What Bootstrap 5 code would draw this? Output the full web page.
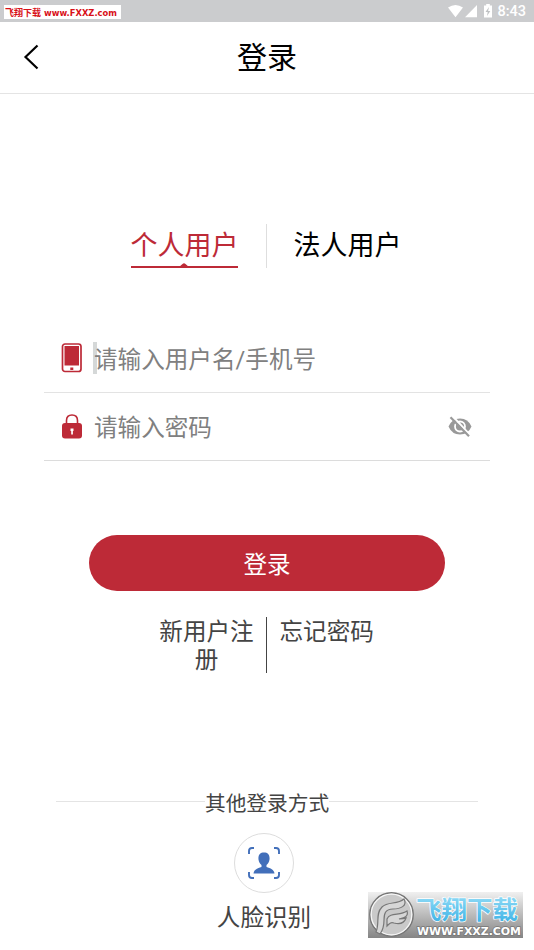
<!DOCTYPE html>
<html lang="zh-CN">
<head>
<meta charset="utf-8">
<meta name="viewport" content="width=device-width, initial-scale=1">
<title>登录</title>
<link href="https://cdn.jsdelivr.net/npm/bootstrap@5.3.0/dist/css/bootstrap.min.css" rel="stylesheet">
<style>
:root { --brand: #bd2a37; }
body { font-family: Roboto, "Noto Sans CJK SC", sans-serif; color: #444; }
svg { display: block; flex: none; }
.screen { height: 950px; }
.statusbar { height: 22px; background: #cbccce; padding: 0 8px 0 4px; }
.source-tag { background: #fff; width: 117px; height: 14px; margin-top: 5px; }
.source-tag svg { width: 117px; height: 14px; overflow: visible; }
.clock { font-size: 14.5px; line-height: 22px; font-weight: 500; padding-top: 2px; }
.topbar { height: 72px; border-bottom: 1px solid #e4e4e4; }
.back { width: 60px; padding-left: 22px; }
.back svg { margin-top: -2px; }
.title { font-size: 30px; line-height: 36px; color: #000; }
.user-tabs { margin-top: 130px; height: 44px; padding-right: 3px; }
.user-tab { width: 107px; font-size: 27px; line-height: 40px; white-space: nowrap; color: #000; padding-top: 2px; }
.user-tab.current { color: var(--brand); border-bottom: 2px solid var(--brand); }
.user-tab svg { margin: -3px auto 0; }
.tab-rule { width: 1px; background: #dedede; margin: 0 27px 0 28px; }
.fields { margin: 56px 44px 0; }
.field { height: 68px; border-bottom: 1px solid #dcdcdc; padding: 0 18px 0 17px; font-size: 23.6px; line-height: 32px; color: #808080; }
.field.first { height: 69px; border-color: #e3e3e3; }
.field .hint { margin-left: 12px; padding-top: 3px; }
.first .hint { padding-top: 4px !important; }
.hint .caret { left: -1px; top: 2px; width: 4px; height: 32px; background: #d5d8d8; z-index: -1; }
.hint { z-index: 0; }
.submit { margin: 74px 89px 0; height: 56px; font-size: 23.6px; line-height: 32px; background: var(--brand); color: #fff; }
.submit span { display: block; padding-top: 3px; }
.links { margin-top: 26px; height: 56px; font-size: 23.6px; line-height: 28px; }
.links a { color: #444; width: 96px; padding-top: 1px; }
.links-rule { width: 1px; background: #444; margin: 0 13px 0 11px; }
.other { margin: 113px 56px 0; font-size: 20.7px; line-height: 30px; height: 32px; padding-top: 1px; }
.other span { padding-top: 2px; }
.other hr { margin: -2px 0 0; color: #e4e4e4; opacity: 1; }
.face-login { padding-right: 6px; }
.face { width: 60px; height: 60px; border: 1px solid #ddd; margin-top: 15px; }
.face-label { font-size: 23.6px; line-height: 32px; margin-top: 9px; }
.watermark { left: 368px; top: 892px; }
</style>
</head>
<body class="bg-white">
<main class="screen position-relative d-flex flex-column overflow-hidden">
  <div class="statusbar d-flex justify-content-between">
    <div class="source-tag"><svg viewBox="0 0 117 14" fill="#d80f18" font-weight="bold"><text x="1" y="11" font-size="9" textLength="36" lengthAdjust="spacingAndGlyphs" font-family="Noto Sans CJK SC">飞翔下载</text><text x="40" y="10.600" font-size="9.500" textLength="73" lengthAdjust="spacingAndGlyphs" font-family="DejaVu Sans">www.FXXZ.com</text></svg></div>
    <div class="d-flex align-items-center text-white">
      <svg width="46" height="22" viewBox="0 0 46 22" fill="#fff"><path d="M1 7.500Q8.500 2.500 16 7.500L8.500 17.300ZM18 17.200 30 5v12.200ZM39.200 4h3.600v1.500H45v12h-8v-12h2.200Z"/><path d="m42 7-3.500 5h2.200l-.7 4 3.300-5h-2.200Z" fill="#bfc1c3"/></svg>
      <span class="clock ms-1">8:43</span>
    </div>
  </div>
  <header class="topbar d-flex align-items-center">
    <a class="back" href="#" aria-label="返回"><svg width="20" height="28" viewBox="0 0 20 28" fill="none" stroke="#000" stroke-width="2.200"><path d="M15.500 2.500 3.500 14l12 11.500"/></svg></a>
    <div class="title flex-fill text-center">登录</div>
    <div class="back"></div>
  </header>
  <nav class="user-tabs d-flex justify-content-center">
    <div class="user-tab current d-flex flex-column"><span>个人用户</span><svg width="10" height="4" viewBox="0 0 10 4" fill="#bd2a37"><path d="M0 4 3.500 1Q5-.4 6.500 1L10 4Z"/></svg></div>
    <div class="tab-rule"></div>
    <div class="user-tab">法人用户</div>
  </nav>
  <section class="fields">
    <div class="field first d-flex align-items-center">
      <svg width="21" height="30" viewBox="0 0 21 30"><rect x="1.500" y="1" width="18.500" height="27.500" rx="2.500" fill="#fff" stroke="#bd2a37" stroke-width="1.700"/><path fill="#bd2a37" d="M3.500 3H18v19.500H3.500zM9.300 24.500h3V27h-3z"/></svg>
      <span class="hint position-relative"><span class="caret position-absolute"></span>请输入用户名/手机号</span>
    </div>
    <div class="field d-flex align-items-center">
      <svg width="21" height="26" viewBox="0 0 21 26"><path d="M5.500 11V6.500Q5.500 1 11 1t5.500 5.500V11" fill="none" stroke="#bd2a37" stroke-width="1.600"/><rect x="1" y="9" width="20" height="15.500" rx="3" fill="#bd2a37"/><path d="M9.500 14.500h3V17h-.6v3.500h-1.700V17h-.7Z" fill="#fff"/></svg>
      <span class="hint">请输入密码</span>
      <svg class="ms-auto" width="24" height="22" viewBox="0 0 24 22"><path d="M.5 10.500Q4 2.500 12 2.500t11.500 8Q20 18.500 12 18.500T.5 10.500Z" fill="#999"/><circle cx="12" cy="10.500" r="5" fill="#999" stroke="#fff" stroke-width="1.800"/><path d="m4.500 0 18 19.500" stroke="#fff" stroke-width="2"/><path d="m2.500 1.200 18.500 19" stroke="#999" stroke-width="2.200"/></svg>
    </div>
  </section>
  <button class="submit btn border-0 rounded-pill p-0" type="button"><span>登录</span></button>
  <div class="links d-flex justify-content-center">
    <a class="text-decoration-none text-center" href="#">新用户注册</a>
    <div class="links-rule"></div>
    <a class="text-decoration-none" href="#">忘记密码</a>
  </div>
  <div class="other d-flex align-items-center"><hr class="flex-fill"><span>其他登录方式</span><hr class="flex-fill"></div>
  <div class="face-login d-flex flex-column align-items-center">
    <div class="face rounded-circle d-flex align-items-center justify-content-center">
      <svg width="34" height="34" viewBox="0 0 34 34"><path d="M2 8V5q0-3 3-3h2M27 2h2q3 0 3 3v3M2 26v3q0 3 3 3h2M27 32h2q3 0 3-3v-3" fill="none" stroke="#426fba" stroke-width="1.900"/><path d="M17 6.500c4 0 6 2.500 5.500 7-.3 2.500-1.500 4.500-3 5.500v2c4 1 7.500 2.500 8 6.500h-21c.5-4 4-5.500 8-6.500v-2c-1.500-1-2.700-3-3-5.500-.5-4.500 1.500-7 5.500-7Z" fill="#426fba"/></svg>
    </div>
    <div class="face-label">人脸识别</div>
  </div>
  <svg class="watermark position-absolute overflow-visible" width="155" height="46" viewBox="0 0 155 46">
    <defs>
      <linearGradient id="bar" x2="0" y2="1"><stop stop-color="#f0f0f0"/><stop offset="1" stop-color="#858585"/></linearGradient>
      <linearGradient id="sky" x2="0" y2="1"><stop offset=".2" stop-color="#8bd8f5"/><stop offset="1" stop-color="#35aee4"/></linearGradient>
    </defs>
    <path d="M0 0h155v46H0z" fill="url(#bar)"/>
    <circle cx="23.500" cy="22.500" r="21.700" fill="#c9c9c9" stroke="#777" stroke-width="1.500"/>
    <circle cx="23.500" cy="22.500" r="20.300" fill="none" stroke="#f6f6f6" stroke-width="1.200"/>
    <path d="M8 40C12 31 7 22 14 15c6-6 15-2 22-8 4 7-4 10-11 10-8 0-9 5-9 11 0 7-1 10-4 14ZM19 27c3-7 13-3 20-8 2 6-4 7-8 8 3 0 5 0 7-1-2 6-8 6-12 5-3-1-4 0-7 3Z" fill="#d6d6d6" stroke="#777" stroke-width="1.200"/>
    <g paint-order="stroke" stroke-linejoin="round">
      <text x="48" y="27" font-weight="700" font-family="Noto Sans CJK SC" font-size="25" textLength="102" lengthAdjust="spacingAndGlyphs" fill="url(#sky)" stroke="#fff" stroke-width="1.500">飞翔下载</text>
      <text x="49" y="42.500" font-weight="700" font-family="DejaVu Sans" font-size="10" textLength="104" lengthAdjust="spacingAndGlyphs" fill="#fff" stroke="#777" stroke-width="1.500">WWW.FXXZ.COM</text>
    </g>
  </svg>
</main>
<script src="https://cdn.jsdelivr.net/npm/bootstrap@5.3.0/dist/js/bootstrap.bundle.min.js"></script>
</body>
</html>
